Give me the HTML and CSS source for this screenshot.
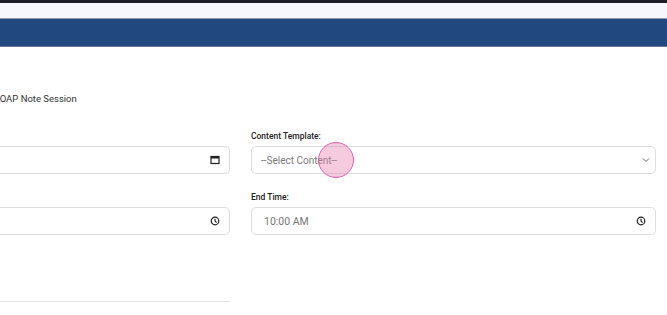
FILE: index.html
```html
<!DOCTYPE html>
<html>
<head>
<meta charset="utf-8">
<link rel="stylesheet" href="styles.css">
</head>
<body>
<div class="topbar"></div>
<div class="subbar"></div>
<div class="navbar"></div>
<main class="main">
  <h1 class="title">SOAP Note Session</h1>
  <div class="form-grid">
    <div class="field">
      <label class="label">Session Date:</label>
      <div class="control">
        <span class="value muted">mm/dd/yyyy</span>
        <svg class="icon" width="10" height="10" viewBox="0 0 10 10"><rect x="1" y="1.5" width="8" height="7" fill="none" stroke="#222" stroke-width="1.2"/><rect x="1" y="1.5" width="8" height="2" fill="#222"/></svg>
      </div>
    </div>
    <div class="field">
      <label class="label">Content Template:</label>
      <div class="control">
        <span class="value placeholder">--Select Content--</span>
        <svg class="icon chevron" width="10" height="10" viewBox="0 0 10 10"><path d="M2 3.5 L5 6.5 L8 3.5" fill="none" stroke="#666" stroke-width="1"/></svg>
      </div>
    </div>
    <div class="field">
      <label class="label">Start Time:</label>
      <div class="control">
        <span class="value muted">09:00 AM</span>
        <svg class="icon" width="10" height="10" viewBox="0 0 10 10"><circle cx="5" cy="5" r="3.8" fill="none" stroke="#222" stroke-width="1.2"/><path d="M5 2.8 V5 L6.6 6.6" fill="none" stroke="#222" stroke-width="1.1"/></svg>
      </div>
    </div>
    <div class="field">
      <label class="label">End Time:</label>
      <div class="control">
        <span class="value time">10:00 AM</span>
        <svg class="icon" width="10" height="10" viewBox="0 0 10 10"><circle cx="5" cy="5" r="3.8" fill="none" stroke="#222" stroke-width="1.2"/><path d="M5 2.8 V5 L6.6 6.6" fill="none" stroke="#222" stroke-width="1.1"/></svg>
      </div>
    </div>
    <div class="divider"></div>
  </div>
</main>
<div class="click-marker"></div>
</body>
</html>
```

FILE: styles.css
```css
html, body {
  margin: 0;
  padding: 0;
  background: #ffffff;
  overflow: hidden;
  width: 667px;
  height: 315px;
  font-family: Roboto, "Liberation Sans", Arial, sans-serif;
}

.topbar {
  height: 3px;
  background: #1d1e2a;
}

.subbar {
  height: 15px;
  background: #f5f7fd;
  border-bottom: 1px solid #9298b0;
}

.navbar {
  height: 27px;
  background: #21487f;
  border-bottom: 1px solid #6c7597;
}

.main {
  padding-top: 45px;
}

.title {
  margin: 0 0 0 -6px;
  font-size: 9.5px;
  font-weight: 400;
  color: #333333;
  line-height: 13px;
}

.form-grid {
  margin-left: -175px;
  margin-top: 25px;
  display: grid;
  grid-template-columns: 405px 405px;
  column-gap: 21px;
  row-gap: 17px;
}

.field {
  display: flex;
  flex-direction: column;
}

.label {
  font-size: 8.5px;
  font-weight: 500;
  color: #222222;
  line-height: 12px;
  height: 12px;
  margin-bottom: 4px;
}

.control {
  box-sizing: border-box;
  height: 28px;
  border: 1px solid #dddddd;
  border-radius: 5px;
  display: flex;
  align-items: center;
  justify-content: space-between;
  padding: 0 9px 0 9px;
  background: #ffffff;
}

.value {
  font-size: 10.5px;
  color: #777777;
}

.placeholder {
  font-size: 10px;
  color: #7a7a7a;
}

.time {
  padding-left: 3px;
  color: #777777;
}

.icon {
  flex: none;
}

.chevron {
  margin-right: -5px;
}

.divider {
  grid-column: 1;
  margin-top: 49px;
  height: 1px;
  background: #e3e3e3;
}

.click-marker {
  position: absolute;
  left: 318px;
  top: 142px;
  width: 36px;
  height: 36px;
  box-sizing: border-box;
  border-radius: 50%;
  background: rgba(233, 118, 170, 0.38);
  border: 1.5px solid #e0609e;
}
```
